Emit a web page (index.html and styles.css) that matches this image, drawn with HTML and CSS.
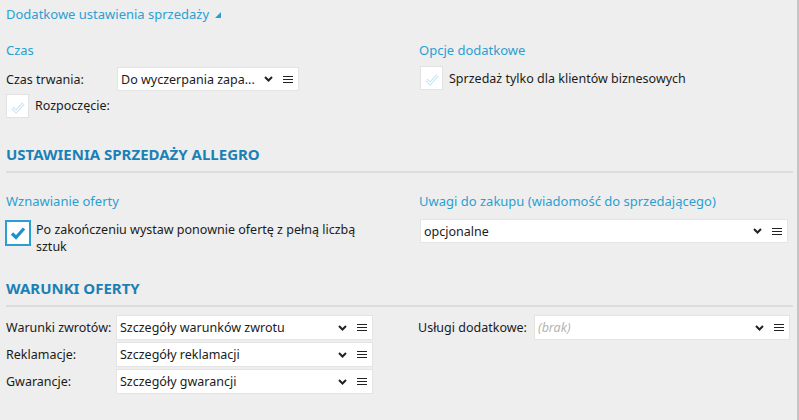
FILE: index.html
```html
<!DOCTYPE html>
<html lang="pl">
<head>
<meta charset="utf-8">
<link rel="stylesheet" href="styles.css">
</head>
<body>
<div class="page">
  <div class="top-title">Dodatkowe ustawienia sprzedaży <span class="tri"></span></div>

  <div class="two-col sec-czas">
    <div class="col-left">
      <div class="sub-title">Czas</div>
      <div class="field-row r-trwania">
        <span class="label lab-trwania">Czas trwania:</span>
        <div class="select sel-trwania">
          <span class="sel-text">Do wyczerpania zapa...</span>
          <span class="chev"><svg width="9" height="6" viewBox="0 0 9 6"><path d="M1 1 L4.5 4.5 L8 1" fill="none" stroke="#222" stroke-width="2"/></svg></span>
          <span class="burger"><i></i><i></i><i></i></span>
        </div>
      </div>
      <div class="check-row r-rozp">
        <span class="cb"><svg width="23" height="24" viewBox="0 0 23 24"><path d="M6 13 L10 17 L18 8" fill="none" stroke="#bfe3f4" stroke-width="3.4"/><path d="M6 13 L10 17 L18 8" fill="none" stroke="#fff" stroke-width="1.4"/></svg></span>
        <span class="cb-label">Rozpoczęcie:</span>
      </div>
    </div>
    <div class="col-right">
      <div class="sub-title">Opcje dodatkowe</div>
      <div class="check-row r-biz">
        <span class="cb"><svg width="23" height="24" viewBox="0 0 23 24"><path d="M6 13 L10 17 L18 8" fill="none" stroke="#bfe3f4" stroke-width="3.4"/><path d="M6 13 L10 17 L18 8" fill="none" stroke="#fff" stroke-width="1.4"/></svg></span>
        <span class="cb-label">Sprzedaż tylko dla klientów biznesowych</span>
      </div>
    </div>
  </div>

  <div class="sec-head h-allegro">USTAWIENIA SPRZEDAŻY ALLEGRO</div>

  <div class="two-col sec-wzn">
    <div class="col-left">
      <div class="sub-title">Wznawianie oferty</div>
      <div class="check-row r-wzn">
        <span class="cb cb-on"><svg width="22" height="22" viewBox="0 0 22 22"><path d="M5 11.5 L9 15.5 L17 6.5" fill="none" stroke="#1e8fd0" stroke-width="3.2"/></svg></span>
        <span class="cb-label wrap">Po zakończeniu wystaw ponownie ofertę z pełną liczbą sztuk</span>
      </div>
    </div>
    <div class="col-right">
      <div class="sub-title">Uwagi do zakupu (wiadomość do sprzedającego)</div>
      <div class="select sel-uwagi">
        <span class="sel-text">opcjonalne</span>
        <span class="chev"><svg width="9" height="6" viewBox="0 0 9 6"><path d="M1 1 L4.5 4.5 L8 1" fill="none" stroke="#222" stroke-width="2"/></svg></span>
        <span class="burger"><i></i><i></i><i></i></span>
      </div>
    </div>
  </div>

  <div class="sec-head h-warunki">WARUNKI OFERTY</div>

  <div class="two-col sec-war">
    <div class="col-left rows">
      <div class="field-row">
        <span class="label lab-w">Warunki zwrotów:</span>
        <div class="select sel-w">
          <span class="sel-text">Szczegóły warunków zwrotu</span>
          <span class="chev"><svg width="9" height="6" viewBox="0 0 9 6"><path d="M1 1 L4.5 4.5 L8 1" fill="none" stroke="#222" stroke-width="2"/></svg></span>
          <span class="burger"><i></i><i></i><i></i></span>
        </div>
      </div>
      <div class="field-row">
        <span class="label lab-w">Reklamacje:</span>
        <div class="select sel-w">
          <span class="sel-text">Szczegóły reklamacji</span>
          <span class="chev"><svg width="9" height="6" viewBox="0 0 9 6"><path d="M1 1 L4.5 4.5 L8 1" fill="none" stroke="#222" stroke-width="2"/></svg></span>
          <span class="burger"><i></i><i></i><i></i></span>
        </div>
      </div>
      <div class="field-row">
        <span class="label lab-w">Gwarancje:</span>
        <div class="select sel-w">
          <span class="sel-text">Szczegóły gwarancji</span>
          <span class="chev"><svg width="9" height="6" viewBox="0 0 9 6"><path d="M1 1 L4.5 4.5 L8 1" fill="none" stroke="#222" stroke-width="2"/></svg></span>
          <span class="burger"><i></i><i></i><i></i></span>
        </div>
      </div>
    </div>
    <div class="col-right rows usl">
      <div class="field-row">
        <span class="label lab-u">Usługi dodatkowe:</span>
        <div class="select sel-u">
          <span class="sel-text placeholder">(brak)</span>
          <span class="chev"><svg width="9" height="6" viewBox="0 0 9 6"><path d="M1 1 L4.5 4.5 L8 1" fill="none" stroke="#222" stroke-width="2"/></svg></span>
          <span class="burger"><i></i><i></i><i></i></span>
        </div>
      </div>
    </div>
  </div>
</div>
</body>
</html>
```

FILE: styles.css
```css
* { box-sizing: border-box; }
html, body { margin: 0; padding: 0; background: #eeeeee; }
body {
  font-family: "Noto Sans", "Open Sans", sans-serif;
  font-size: 12.5px;
  color: #1b1b1b;
}
.page {
  width: 799px;
  height: 420px;
  border-right: 2px solid #c4c4c4;
  padding-left: 6px;
  padding-right: 4px;
}
.top-title {
  height: 28px;
  line-height: 28px;
  color: #2aa0d2;
  font-size: 13px;
  display: flex;
  align-items: center;
  gap: 6px;
}
.tri {
  width: 0; height: 0;
  border-left: 6px solid transparent;
  border-bottom: 6px solid #2aa0d2;
  margin-top: 2px;
}
.two-col {
  display: grid;
  grid-template-columns: 413px 1fr;
}
.sub-title {
  color: #2aa0d2;
  font-size: 13px;
  height: 20px;
  line-height: 20px;
}
.sec-czas { margin-top: 12px; }
.field-row {
  display: flex;
  align-items: center;
  height: 24px;
}
.r-trwania { margin-top: 7px; }
.label { flex: none; }
.lab-trwania { width: 111px; }
.select {
  display: flex;
  align-items: center;
  background: #fff;
  border: 1px solid #e4e4e4;
  height: 24px;
  padding-left: 3px;
}
.sel-text { flex: 1; white-space: nowrap; overflow: hidden; }
.placeholder { color: #b4b4b4; font-style: italic; }
.chev { width: 20px; display: flex; justify-content: center; align-items: center; }
.burger {
  width: 20px;
  display: flex;
  flex-direction: column;
  align-items: center;
  gap: 2px;
}
.burger i { display: block; width: 10px; height: 1px; background: #222; }
.sel-trwania { width: 182px; }
.check-row { display: flex; align-items: center; }
.cb {
  flex: none;
  width: 23px;
  height: 24px;
  background: #fff;
  border: 1px solid #e2e2e2;
  display: flex;
}
.cb-label { margin-left: 6px; }
.r-rozp { margin-top: 2px; height: 25px; }
.r-biz { margin-top: 6px; margin-left: 1px; }
.sec-head {
  color: #1b80b6;
  font-weight: bold;
  font-size: 15px;
  height: 24px;
  line-height: 24px;
  border-bottom: 2px solid #dcdcdc;
  box-sizing: content-box;
  padding-bottom: 5px;
}
.h-allegro { margin-top: 24px; }
.sec-wzn { margin-top: 18px; }
.r-wzn { margin-top: 9px; align-items: flex-start; }
.cb-on {
  width: 26px;
  height: 26px;
  border: 2px solid #2a9fd4;
  margin-left: -1px;
}
.r-wzn .cb-label { margin-left: 5px; margin-top: 1px; }
.wrap { width: 330px; line-height: 17px; }
.sel-uwagi { width: 368px; margin-top: 8px; height: 24px; margin-left: 1px; }
.h-warunki { margin-top: 21px; }
.sec-war { margin-top: 8px; }
.rows { display: flex; flex-direction: column; gap: 2px; }
.rows .field-row { height: 25px; }
.rows .select { height: 25px; }
.lab-w { width: 110px; }
.sel-w { width: 257px; }
.lab-u { width: 116px; margin-left: -1px; }
.sel-u { width: 256px; }
```
